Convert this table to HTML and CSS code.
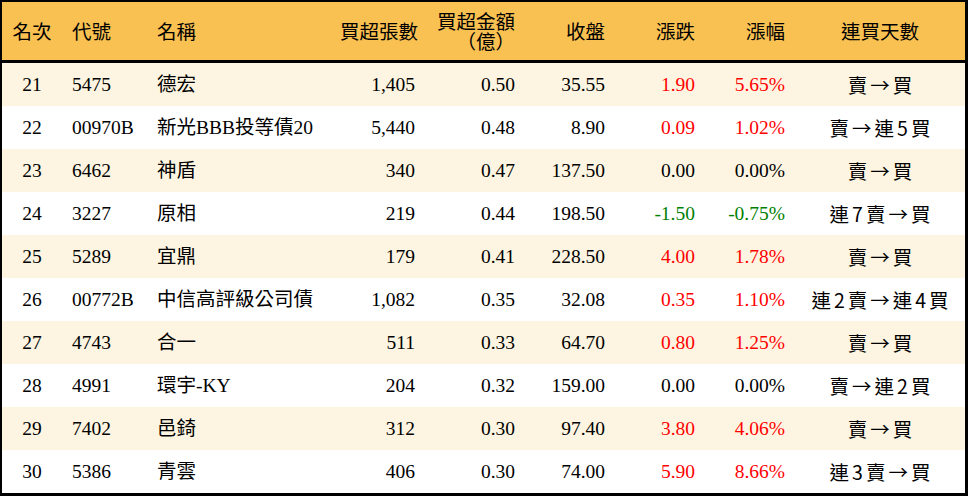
FILE: index.html
```html
<!DOCTYPE html>
<html lang="zh-Hant">
<head>
<meta charset="utf-8">
<title>買超排行</title>
<link rel="stylesheet" href="styles.css">
</head>
<body>
<table class="rank">
  <colgroup>
    <col class="c-rank"><col class="c-code"><col class="c-name"><col class="c-vol"><col class="c-amt"><col class="c-close"><col class="c-chg"><col class="c-pct"><col class="c-days">
  </colgroup>
  <thead>
    <tr>
      <th class="center">名次</th>
      <th class="left">代號</th>
      <th class="left">名稱</th>
      <th class="right">買超張數</th>
      <th class="right two">買超金額<br>（億）</th>
      <th class="right">收盤</th>
      <th class="right">漲跌</th>
      <th class="right">漲幅</th>
      <th class="center">連買天數</th>
    </tr>
  </thead>
  <tbody>
    <tr class="alt"><td class="center">21</td><td>5475</td><td>德宏</td><td class="right">1,405</td><td class="right">0.50</td><td class="right">35.55</td><td class="right up">1.90</td><td class="right up">5.65%</td><td class="center days">賣→買</td></tr>
    <tr><td class="center">22</td><td>00970B</td><td>新光BBB投等債20</td><td class="right">5,440</td><td class="right">0.48</td><td class="right">8.90</td><td class="right up">0.09</td><td class="right up">1.02%</td><td class="center days">賣→連5買</td></tr>
    <tr class="alt"><td class="center">23</td><td>6462</td><td>神盾</td><td class="right">340</td><td class="right">0.47</td><td class="right">137.50</td><td class="right">0.00</td><td class="right">0.00%</td><td class="center days">賣→買</td></tr>
    <tr><td class="center">24</td><td>3227</td><td>原相</td><td class="right">219</td><td class="right">0.44</td><td class="right">198.50</td><td class="right down">-1.50</td><td class="right down">-0.75%</td><td class="center days">連7賣→買</td></tr>
    <tr class="alt"><td class="center">25</td><td>5289</td><td>宜鼎</td><td class="right">179</td><td class="right">0.41</td><td class="right">228.50</td><td class="right up">4.00</td><td class="right up">1.78%</td><td class="center days">賣→買</td></tr>
    <tr><td class="center">26</td><td>00772B</td><td>中信高評級公司債</td><td class="right">1,082</td><td class="right">0.35</td><td class="right">32.08</td><td class="right up">0.35</td><td class="right up">1.10%</td><td class="center days">連2賣→連4買</td></tr>
    <tr class="alt"><td class="center">27</td><td>4743</td><td>合一</td><td class="right">511</td><td class="right">0.33</td><td class="right">64.70</td><td class="right up">0.80</td><td class="right up">1.25%</td><td class="center days">賣→買</td></tr>
    <tr><td class="center">28</td><td>4991</td><td>環宇-KY</td><td class="right">204</td><td class="right">0.32</td><td class="right">159.00</td><td class="right">0.00</td><td class="right">0.00%</td><td class="center days">賣→連2買</td></tr>
    <tr class="alt"><td class="center">29</td><td>7402</td><td>邑錡</td><td class="right">312</td><td class="right">0.30</td><td class="right">97.40</td><td class="right up">3.80</td><td class="right up">4.06%</td><td class="center days">賣→買</td></tr>
    <tr><td class="center">30</td><td>5386</td><td>青雲</td><td class="right">406</td><td class="right">0.30</td><td class="right">74.00</td><td class="right up">5.90</td><td class="right up">8.66%</td><td class="center days">連3賣→買</td></tr>
  </tbody>
</table>
</body>
</html>
```

FILE: styles.css
```css
html, body {
  margin: 0;
  padding: 0;
  background: #ffffff;
}

.rank {
  width: 968px;
  table-layout: fixed;
  border-collapse: separate;
  border-spacing: 0;
  border-top: 2px solid #000;
  border-left: 2px solid #000;
  border-right: 3px solid #000;
  border-bottom: 3px solid #000;
  font-family: "Liberation Serif", "Noto Sans CJK TC", serif;
  font-size: 19.5px;
  color: #000;
}

.c-rank { width: 60px; }
.c-code { width: 85px; }
.c-name { width: 183px; }
.c-vol { width: 95px; }
.c-amt { width: 100px; }
.c-close { width: 90px; }
.c-chg { width: 90px; }
.c-pct { width: 90px; }
.c-days { width: 170px; }

.rank thead tr {
  height: 61px;
}

.rank th {
  background: #f9c152;
  padding: 4px 10px 0;
  font-weight: normal;
  border-bottom: 3px solid #000;
  vertical-align: middle;
  line-height: 20px;
  white-space: nowrap;
}

.rank tbody tr {
  height: 43px;
}

.rank td {
  padding: 1px 10px 0;
  vertical-align: middle;
  line-height: 22px;
  text-align: left;
  white-space: nowrap;
}

.rank tr.alt td {
  background: #fdf5e1;
}

.rank .left { text-align: left; }
.rank .right { text-align: right; }
.rank .center { text-align: center; }

.rank .up { color: #ff0000; }
.rank .down { color: #008000; }

.rank .days {
  font-family: "Noto Sans CJK TC", sans-serif;
  letter-spacing: 3px;
  text-indent: 3px;
}
```
